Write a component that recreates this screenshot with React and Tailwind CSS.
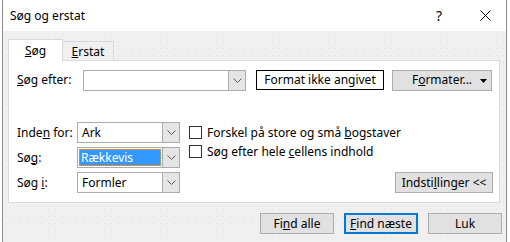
import React from 'react'

const Chevron = () => (
  <svg width="9" height="5" viewBox="0 0 9 5" className="block">
    <polyline points="0.5,0.5 4.5,4.5 8.5,0.5" fill="none" stroke="#5a5a5a" strokeWidth="1" />
  </svg>
)

function Combo({ value, width, selected }) {
  return (
    <div
      className="flex h-[21px] items-stretch border border-[#acacac] bg-white"
      style={{ width }}
    >
      <div className="flex flex-1 items-center p-[1px]">
        {selected ? (
          <div className="flex h-full w-full items-center border border-dotted border-[#f0a040] bg-[#3399ff] pl-[1px] text-white">
            {value}
          </div>
        ) : (
          <span className="pl-[3px]">{value}</span>
        )}
      </div>
      <div className="flex w-[17px] items-center justify-center border-l border-[#acacac] bg-[#e5e5e5]">
        <Chevron />
      </div>
    </div>
  )
}

function Button({ children, className = '', focused }) {
  return (
    <div
      className={`flex h-[21px] items-center justify-center bg-[#e1e1e1] ${
        focused ? 'border-2 border-[#0078d7]' : 'border border-[#adadad]'
      } ${className}`}
    >
      {children}
    </div>
  )
}

function Checkbox({ children }) {
  return (
    <div className="flex h-[19px] items-center gap-[5px]">
      <div className="h-[13px] w-[13px] border border-[#333] bg-white" />
      <span>{children}</span>
    </div>
  )
}

export default function App() {
  return (
    <div className="relative h-[242px] w-[510px] overflow-hidden bg-white font-['Noto_Sans',sans-serif] text-[12px] leading-[16px] text-black">
      <div className="ml-[2px] flex h-full w-[505px] flex-col border-x border-[#8c8c8c]">
        {/* title bar */}
        <div className="flex h-[31px] shrink-0 items-center bg-white pl-[7px]">
          <span className="flex-1">Søg og erstat</span>
          <span className="mr-[38px] text-[14px]">?</span>
          <svg width="11" height="11" viewBox="0 0 11 11" className="mr-[15px]">
            <path d="M0.5 0.5 L10.5 10.5 M10.5 0.5 L0.5 10.5" stroke="#000" strokeWidth="1" />
          </svg>
        </div>

        {/* body */}
        <div className="flex flex-1 flex-col bg-[#f0f0f0] bg-[radial-gradient(circle,#e0e0e0_0.6px,transparent_0.8px)] bg-[length:7px_7px] px-[5px] pt-[8px]">
          <div className="flex h-[22px] items-end">
            <div className="relative z-10 flex h-[22px] w-[55px] items-center justify-center border border-b-0 border-[#d9d9d9] bg-white">
              <span><u>S</u>øg</span>
            </div>
            <div className="flex h-[20px] w-[51px] items-center justify-center border border-b-0 border-l-0 border-[#d9d9d9] bg-[#f0f0f0]">
              <span><u>E</u>rstat</span>
            </div>
          </div>

          {/* tab panel */}
          <div className="-mt-[1px] flex h-[143px] w-[492px] flex-col border border-[#d9d9d9] bg-white pl-[8px] pt-[9px]">
            <div className="flex h-[20px] items-center">
              <span className="w-[66px]"><u>S</u>øg efter:</span>
              <Combo value="" width={163} />
              <div className="ml-[10px] flex h-[20px] w-[128px] items-center justify-center border border-black bg-white">
                Format ikke angivet
              </div>
              <Button className="relative ml-[8px] h-[20px] w-[100px]">
                <span>F<u>o</u>rmater...</span>
                <svg width="7" height="4" viewBox="0 0 7 4" className="absolute right-[4px] top-[8px]">
                  <polygon points="0,0 7,0 3.5,4" fill="#000" />
                </svg>
              </Button>
            </div>

            <div className="mt-[32px] flex">
              <div className="flex flex-col gap-[4px]">
                <div className="flex items-center">
                  <span className="w-[60px]">Inde<u>n</u> for:</span>
                  <Combo value="Ark" width={103} />
                </div>
                <div className="flex items-center">
                  <span className="w-[60px]">Sø<u>g</u>:</span>
                  <Combo value="Rækkevis" width={103} selected />
                </div>
                <div className="flex items-center">
                  <span className="w-[60px]">Søg <u>i</u>:</span>
                  <Combo value="Formler" width={103} />
                </div>
              </div>

              <div className="ml-[9px] flex flex-1 flex-col pt-[1px]">
                <Checkbox>Forskel på store og små <u>b</u>ogstaver</Checkbox>
                <Checkbox>Søg efter hele <u>c</u>ellens indhold</Checkbox>
                <div className="mt-auto flex justify-end pr-[6px]">
                  <Button className="w-[98px]">
                    <span>Indsti<u>l</u>linger &lt;&lt;</span>
                  </Button>
                </div>
              </div>
            </div>
          </div>

          {/* bottom buttons */}
          <div className="-mr-[1px] mt-[10px] flex justify-end gap-[10px]">
            <Button className="w-[74px]">
              <span>Fi<u>n</u>d alle</span>
            </Button>
            <Button className="w-[74px]" focused>
              <span><u>F</u>ind næste</span>
            </Button>
            <Button className="w-[74px]">
              <span>Luk</span>
            </Button>
          </div>
        </div>
      </div>
    </div>
  )
}
